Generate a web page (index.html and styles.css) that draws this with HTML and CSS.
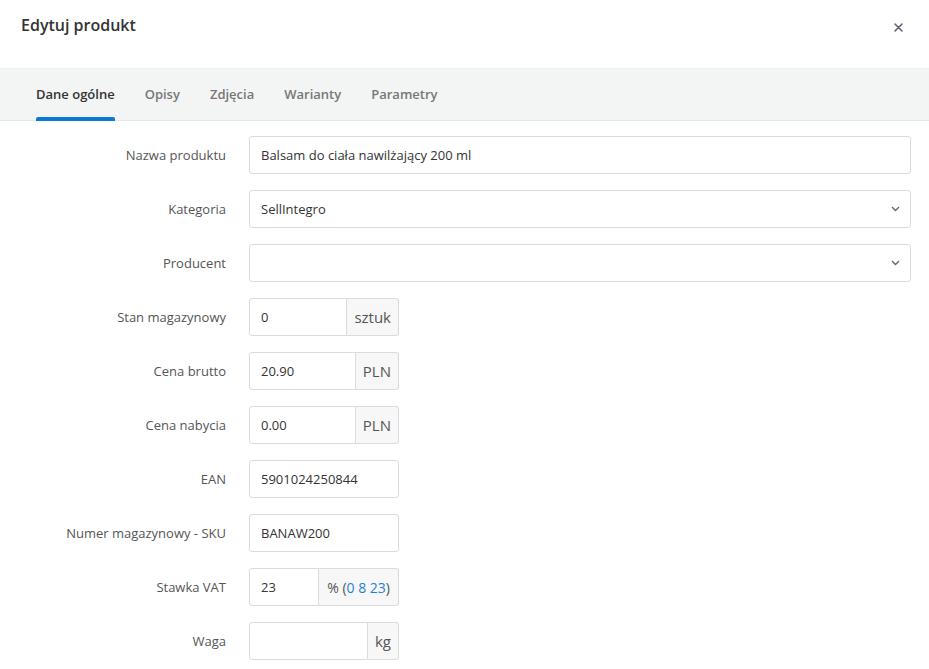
FILE: index.html
```html
<!DOCTYPE html>
<html lang="pl">
<head>
<meta charset="utf-8">
<title>Edytuj produkt</title>
<link rel="stylesheet" href="styles.css">
</head>
<body>
<div class="modal">
  <header class="modal-header">
    <h1 class="modal-title">Edytuj produkt</h1>
    <button class="close" aria-label="Zamknij">
      <svg width="9" height="9" viewBox="0 0 9 9"><path d="M1 1L8 8M8 1L1 8" stroke="#5f6673" stroke-width="1.6" stroke-linecap="round"/></svg>
    </button>
  </header>
  <nav class="tabs">
    <a class="tab active">Dane ogólne</a>
    <a class="tab">Opisy</a>
    <a class="tab">Zdjęcia</a>
    <a class="tab">Warianty</a>
    <a class="tab">Parametry</a>
  </nav>
  <form class="form">
    <div class="row">
      <label class="label">Nazwa produktu</label>
      <div class="control full"><div class="field">Balsam do ciała nawilżający 200 ml</div></div>
    </div>
    <div class="row">
      <label class="label">Kategoria</label>
      <div class="control full"><div class="field select">SellIntegro<svg class="chev" width="9" height="6" viewBox="0 0 9 6"><path d="M1 1l3.5 3.5L8 1" fill="none" stroke="#5f6673" stroke-width="1.4"/></svg></div></div>
    </div>
    <div class="row">
      <label class="label">Producent</label>
      <div class="control full"><div class="field select"><svg class="chev" width="9" height="6" viewBox="0 0 9 6"><path d="M1 1l3.5 3.5L8 1" fill="none" stroke="#5f6673" stroke-width="1.4"/></svg></div></div>
    </div>
    <div class="row">
      <label class="label">Stan magazynowy</label>
      <div class="control group"><div class="field">0</div><span class="addon">sztuk</span></div>
    </div>
    <div class="row">
      <label class="label">Cena brutto</label>
      <div class="control group"><div class="field">20.90</div><span class="addon">PLN</span></div>
    </div>
    <div class="row">
      <label class="label">Cena nabycia</label>
      <div class="control group"><div class="field">0.00</div><span class="addon">PLN</span></div>
    </div>
    <div class="row">
      <label class="label">EAN</label>
      <div class="control group"><div class="field">5901024250844</div></div>
    </div>
    <div class="row">
      <label class="label">Numer magazynowy - SKU</label>
      <div class="control group"><div class="field">BANAW200</div></div>
    </div>
    <div class="row">
      <label class="label">Stawka VAT</label>
      <div class="control group"><div class="field">23</div><span class="addon vat"><span>% (<a class="lnk">0</a> <a class="lnk">8</a> <a class="lnk">23</a>)</span></span></div>
    </div>
    <div class="row">
      <label class="label">Waga</label>
      <div class="control group"><div class="field"></div><span class="addon">kg</span></div>
    </div>
  </form>
</div>
</body>
</html>
```

FILE: styles.css
```css
* { box-sizing: border-box; }
html, body { margin: 0; padding: 0; background: #fff; }
body {
  font-family: "Open Sans", "Noto Sans", sans-serif;
  font-size: 13px;
  color: #333;
  overflow: hidden;
}
.modal { width: 929px; }
.modal-header {
  height: 68px;
  display: flex;
  align-items: flex-start;
  justify-content: space-between;
  padding: 14px 24px 0 21px;
}
.modal-title {
  margin: 0;
  font-size: 16px;
  font-weight: 600;
  color: #333;
  line-height: 22px;
}
.close {
  border: 0;
  background: none;
  padding: 0;
  margin-top: 6px;
  width: 14px;
  height: 14px;
  display: flex;
  align-items: center;
  justify-content: center;
}
.tabs {
  height: 53px;
  background: #f3f4f4;
  border-top: 1px solid #eceeee;
  border-bottom: 1px solid #e6e8e8;
  display: flex;
  padding-left: 21px;
}
.tab {
  padding: 0 15px;
  line-height: 51px;
  font-weight: 600;
  color: #777;
  position: relative;
}
.tab.active { color: #333; }
.tab.active::after {
  content: "";
  position: absolute;
  left: 15px;
  right: 15px;
  bottom: -1px;
  height: 4px;
  background: #0a78d9;
  border-radius: 2px 2px 0 0;
}
.form {
  padding-top: 15px;
  display: flex;
  flex-direction: column;
  gap: 16px;
}
.row {
  display: flex;
  align-items: center;
  height: 38px;
}
.label {
  width: 226px;
  text-align: right;
  color: #555;
  flex: none;
}
.control {
  margin-left: 23px;
  display: flex;
  height: 38px;
}
.control.full { width: 662px; }
.control.group { width: 150px; }
.field {
  flex: 1;
  min-width: 0;
  border: 1px solid #d9dcde;
  border-radius: 3px;
  padding: 0 11px;
  display: flex;
  align-items: center;
  background: #fff;
  color: #333;
}
.group .field:not(:last-child) {
  border-radius: 3px 0 0 3px;
}
.select { justify-content: space-between; }
.select .chev { margin-left: auto; margin-right: -1px; }
.addon {
  flex: none;
  display: flex;
  align-items: center;
  padding: 0 7px;
  background: #f7f7f8;
  border: 1px solid #d9dcde;
  border-left: 0;
  border-radius: 0 3px 3px 0;
  color: #555;
  font-size: 15px;
}
.addon.vat { font-size: 14px; padding: 0 8px; }
.lnk { color: #1b82e0; }
```
